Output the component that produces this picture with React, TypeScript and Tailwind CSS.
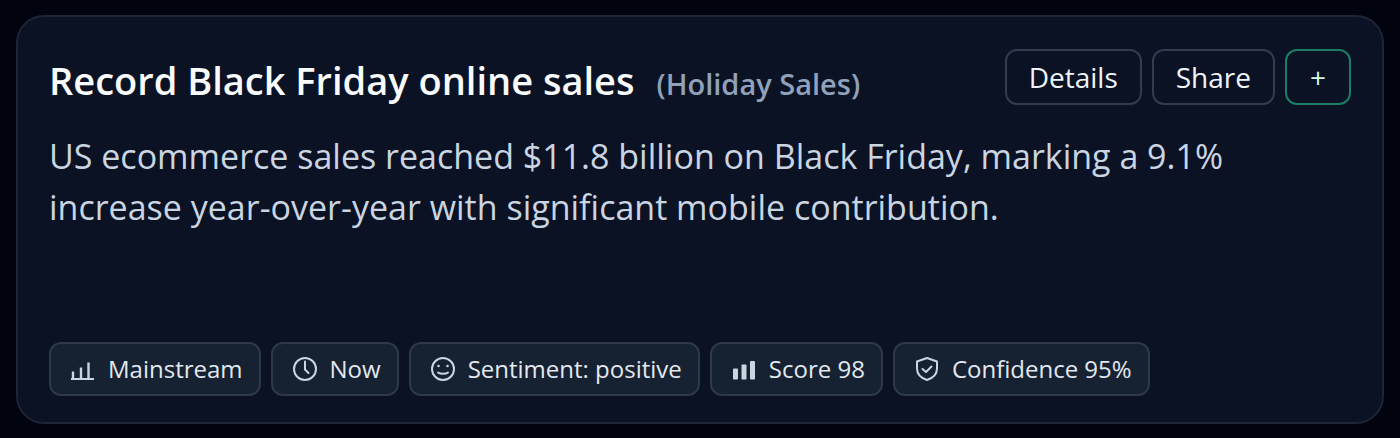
import type { ReactNode } from "react";

type Tag = {
  key: string;
  label: string;
  icon: ReactNode;
};

const strokeProps = {
  viewBox: "0 0 24 24",
  fill: "none",
  stroke: "currentColor",
  strokeWidth: 2,
  strokeLinecap: "round" as const,
  strokeLinejoin: "round" as const,
  className: "size-6 shrink-0 text-slate-300",
  "aria-hidden": true,
};

const TAGS: Tag[] = [
  {
    key: "mainstream",
    label: "Mainstream",
    icon: (
      <svg {...strokeProps} strokeLinecap="butt">
        <path d="M0 22h23" />
        <path d="M2 22v-7.500M10 22V10.500M17.500 22V5.500" strokeWidth="2.400" />
      </svg>
    ),
  },
  {
    key: "now",
    label: "Now",
    icon: (
      <svg {...strokeProps}>
        <circle cx="12" cy="12" r="11" />
        <path d="M12 4.500v8l3.500 3.500" />
      </svg>
    ),
  },
  {
    key: "sentiment",
    label: "Sentiment: positive",
    icon: (
      <svg {...strokeProps}>
        <circle cx="12" cy="12" r="11" />
        <path d="M7 15.500c2.500 1.800 7.500 1.800 10 0" />
        <circle cx="7.500" cy="9" r="1.300" fill="currentColor" stroke="none" />
        <circle cx="16.500" cy="9" r="1.300" fill="currentColor" stroke="none" />
      </svg>
    ),
  },
  {
    key: "score",
    label: "Score 98",
    icon: (
      <svg {...strokeProps} fill="currentColor" stroke="none">
        <rect x="1" y="11.500" width="5" height="11" rx="0.8" />
        <rect x="9.500" y="7.500" width="5" height="15" rx="0.8" />
        <rect x="18" y="4" width="5" height="18.500" rx="0.8" />
      </svg>
    ),
  },
  {
    key: "confidence",
    label: "Confidence 95%",
    icon: (
      <svg {...strokeProps}>
        <path d="M12 1l10 3.500v7c0 6-4 9.500-10 11.500-6-2-10-5.500-10-11.500v-7z" />
        <path d="M7.500 12l3.500 3 5.500-5.500" />
      </svg>
    ),
  },
];

function ActionButton({ children, label, accent }: { children: ReactNode; label?: string; accent?: boolean }) {
  return (
    <button
      type="button"
      aria-label={label}
      className={
        accent
          ? "flex h-14 items-center rounded-xl border-2 border-[#1c7d65] px-[23px] text-[28px] text-emerald-100"
          : "flex h-14 items-center rounded-xl border-2 border-[#313c4e] px-[22px] text-[28px] text-slate-100"
      }
    >
      {children}
    </button>
  );
}

export default function App() {
  return (
    <main className="min-h-screen bg-[#01030f] px-4 pt-[15px] pb-[14px] font-['Open_Sans','Noto_Sans',sans-serif]">
      <article className="rounded-[28px] border-2 border-[#1c2637] bg-[#0a1224] px-[31px] pt-8 pb-[26px]">
        <header className="flex items-start justify-between gap-6">
          <h2 className="flex items-baseline gap-[22px] pt-[5px] text-[38px] leading-[52px] font-semibold text-slate-50">
            Record Black Friday online sales
            <span className="text-[29px] text-slate-400">(Holiday Sales)</span>
          </h2>
          <div className="flex gap-[10px]">
            <ActionButton>Details</ActionButton>
            <ActionButton>Share</ActionButton>
            <ActionButton label="Add" accent>
              +
            </ActionButton>
          </div>
        </header>

        <p className="mt-[21px] min-h-[211px] text-[34px] leading-[51px] text-slate-300">
          US ecommerce sales reached $11.8 billion on Black Friday, marking a 9.1% increase year-over-year with
          significant mobile contribution.
        </p>

        <ul className="flex flex-wrap gap-[10px]">
          {TAGS.map((tag) => (
            <li
              key={tag.key}
              className="flex h-[54px] items-center gap-[13px] rounded-xl border-2 border-[#2d394a] bg-[#162131] pr-4 pl-5 text-[24px] text-slate-200"
            >
              {tag.icon}
              {tag.label}
            </li>
          ))}
        </ul>
      </article>
    </main>
  );
}
